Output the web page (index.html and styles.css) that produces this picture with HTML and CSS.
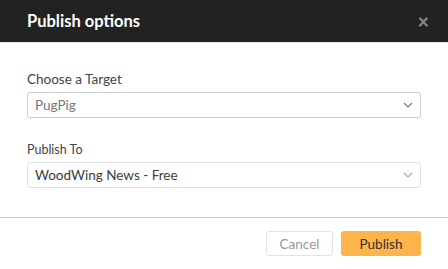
FILE: index.html
```html
<!DOCTYPE html>
<html lang="en">

<head>
    <meta charset="UTF-8">
    <meta name="viewport" content="width=device-width, initial-scale=1.0">
    <title>Publish options</title>
    <link rel="stylesheet" href="styles.css">
</head>

<body>
    <div class="dialog">
        <header class="dialog-header">
            <h1>Publish options</h1>
            <span class="dialog-close">&times;</span>
        </header>
        <main class="dialog-body">
            <div class="field">
                <label for="target" class="label-big">Choose a Target</label>
                <div class="select muted" id="target">
                    <span>PugPig</span>
                    <svg class="chevron" width="10" height="6" viewBox="0 0 10 6"><path d="M1 1l4 4 4-4" fill="none" stroke="#777" stroke-width="1.2"/></svg>
                </div>
            </div>
            <div class="field">
                <label for="publish-to">Publish To</label>
                <div class="select light" id="publish-to">
                    <span>WoodWing News - Free</span>
                    <svg class="chevron" width="10" height="6" viewBox="0 0 10 6"><path d="M1 1l4 4 4-4" fill="none" stroke="#aaa" stroke-width="1.2"/></svg>
                </div>
            </div>
        </main>
        <footer class="dialog-footer">
            <button class="btn btn-cancel">Cancel</button>
            <button class="btn btn-publish">Publish</button>
        </footer>
    </div>
</body>

</html>
```

FILE: styles.css
```css
body {
    font-family: Lato, "Open Sans", sans-serif;
    background-color: #fff;
    margin: 0;
    padding: 0;
}

.dialog {
    width: 448px;
    height: 269px;
    background-color: #fff;
}

.dialog-header {
    height: 42px;
    background-color: #222;
    border-bottom: 1px solid #e6e6e6;
    display: flex;
    align-items: center;
    justify-content: space-between;
    padding: 0 19px 0 27px;
}

.dialog-header h1 {
    margin: 0;
    font-size: 16.5px;
    font-weight: 700;
    color: #fff;
}

.dialog-close {
    color: #8a8a8a;
    font-size: 20px;
    font-weight: 700;
    line-height: 1;
    cursor: pointer;
}

.dialog-body {
    padding: 28px 27px 0 27px;
    height: 146px;
    border-bottom: 1px solid #c3ced6;
}

.field {
    margin-bottom: 24px;
}

label {
    display: block;
    font-size: 12.5px;
    color: #444;
    margin-bottom: 5px;
}

.label-big {
    font-size: 13.5px;
}

.select {
    height: 24px;
    border: 1px solid #ccc;
    border-radius: 3px;
    display: flex;
    align-items: center;
    justify-content: space-between;
    padding: 0 7px 0 7px;
    font-size: 13.5px;
}

.select.muted {
    color: #777;
}

.select.light {
    color: #3d3d3d;
    border-color: #e0e0e0;
}

.dialog-footer {
    display: flex;
    justify-content: flex-end;
    gap: 8px;
    padding: 13px 27px 0 0;
}

.btn {
    height: 25px;
    border-radius: 3px;
    font-family: inherit;
    font-size: 13.5px;
    padding: 0;
    cursor: pointer;
}

.btn-cancel {
    width: 67px;
    background-color: #fff;
    border: 1px solid #e2e2e2;
    color: #999;
}

.btn-publish {
    width: 80px;
    background-color: #fdb44b;
    border: none;
    color: #333;
}
```
